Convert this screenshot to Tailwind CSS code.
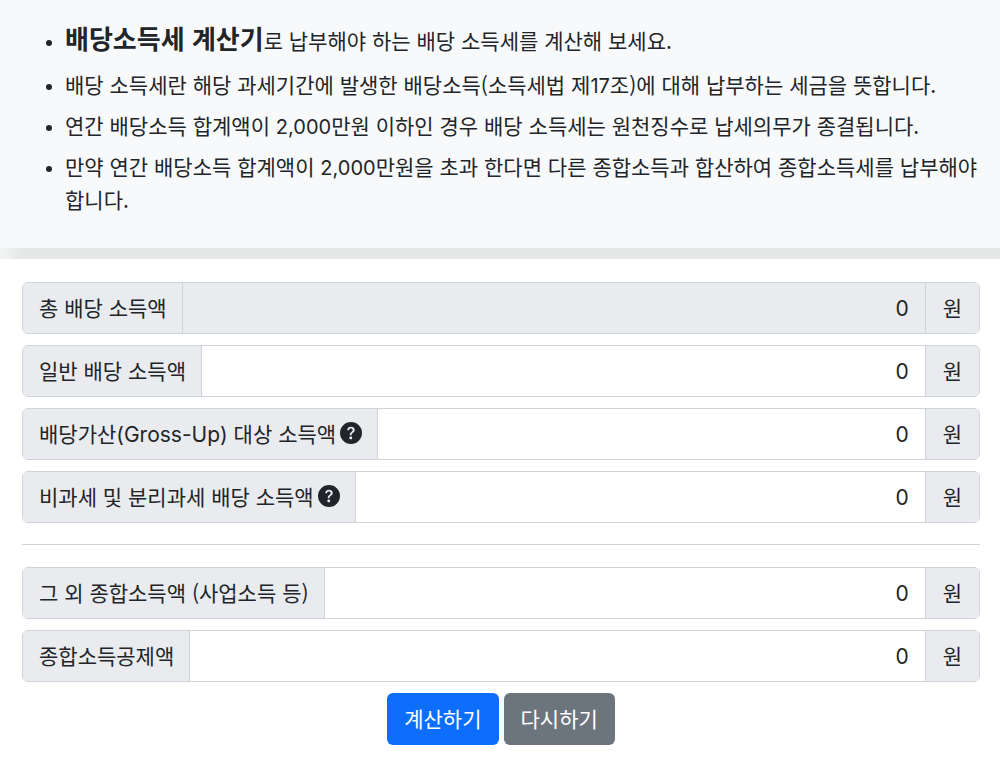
<!DOCTYPE html>
<html lang="ko">

<head>
    <meta charset="UTF-8">
    <meta name="viewport" content="width=device-width, initial-scale=1.0">
    <title>배당소득세 계산기</title>
    <script src="https://cdn.jsdelivr.net/npm/@tailwindcss/browser@4"></script>
</head>

<body class="bg-white text-[#212529] font-['Noto_Sans_CJK_KR',sans-serif] text-[21px] leading-[33px]">

    <!-- descripción -->
    <section class="bg-[#f8f9fb] pt-[18px] pr-4 pb-6 pl-[65px]">
        <ul class="list-disc flex flex-col gap-2 pb-2 break-keep marker:text-base">
            <li class="pb-[3px]"><strong class="text-[26px] leading-[39px] font-bold">배당소득세 계산기</strong>로 납부해야 하는 배당 소득세를 계산해 보세요.</li>
            <li>배당 소득세란 해당 과세기간에 발생한 배당소득(소득세법 제<span class="font-[Inter] text-xl leading-none">17</span>조)에 대해 납부하는 세금을 뜻합니다.</li>
            <li>연간 배당소득 합계액이 <span class="font-[Inter] text-xl leading-none">2,000</span>만원 이하인 경우 배당 소득세는 원천징수로 납세의무가 종결됩니다.</li>
            <li>만약 연간 배당소득 합계액이 <span class="font-[Inter] text-xl leading-none">2,000</span>만원을 초과 한다면 다른 종합소득과 합산하여 종합소득세를 납부해야 합니다.</li>
        </ul>
    </section>
    <div class="h-[11px] bg-linear-to-r from-[#f3f4f4] via-[#e6e8e7] via-2% to-[#e6e8e7]"></div>

    <!-- formulario -->
    <form class="pl-[22px] pr-5 pt-[23px] pb-4">
        <div class="flex flex-col gap-[11px]">
            <div class="flex h-[52px] rounded-md border border-[#ced4da] overflow-hidden">
                <label for="total" class="flex items-center pl-4 pr-[15px] pb-0.5 bg-[#e9ebee] border-r border-[#ced4da] whitespace-nowrap">총 배당 소득액</label>
                <input id="total" type="text" value="0" readonly class="flex-1 min-w-0 px-4 bg-[#e9ebee] text-right font-[Inter]">
                <span class="flex items-center px-[17px] pb-0.5 bg-[#e9ebee] border-l border-[#ced4da]">원</span>
            </div>
            <div class="flex h-[52px] rounded-md border border-[#ced4da] overflow-hidden">
                <label for="general" class="flex items-center pl-4 pr-[15px] pb-0.5 bg-[#e9ebee] border-r border-[#ced4da] whitespace-nowrap">일반 배당 소득액</label>
                <input id="general" type="text" value="0" class="flex-1 min-w-0 px-4 bg-white text-right font-[Inter]">
                <span class="flex items-center px-[17px] pb-0.5 bg-[#e9ebee] border-l border-[#ced4da]">원</span>
            </div>
            <div class="flex h-[52px] rounded-md border border-[#ced4da] overflow-hidden">
                <label for="grossup" class="flex items-center pl-4 pr-[15px] pb-0.5 bg-[#e9ebee] border-r border-[#ced4da] whitespace-nowrap">
                    <span>배당가산<span class="font-[Inter] leading-none">(Gross-Up)</span> 대상 소득액</span>
                    <svg class="ml-1 size-[22px]" viewBox="0 0 16 16" fill="currentColor" aria-hidden="true">
                        <path d="M16 8A8 8 0 1 1 0 8a8 8 0 0 1 16 0M5.496 6.033h.825c.138 0 .248-.113.266-.25.09-.656.54-1.134 1.342-1.134.686 0 1.314.343 1.314 1.168 0 .635-.374.927-.965 1.371-.673.489-1.206 1.06-1.168 1.987l.003.217a.25.25 0 0 0 .25.246h.811a.25.25 0 0 0 .25-.25v-.105c0-.718.273-.927 1.01-1.486.609-.463 1.244-.977 1.244-2.056 0-1.511-1.276-2.241-2.673-2.241-1.267 0-2.655.59-2.75 2.286a.237.237 0 0 0 .241.247m2.325 6.443c.61 0 1.029-.394 1.029-.927 0-.552-.42-.94-1.029-.94-.584 0-1.009.388-1.009.94 0 .533.425.927 1.01.927z" />
                    </svg>
                </label>
                <input id="grossup" type="text" value="0" class="flex-1 min-w-0 px-4 bg-white text-right font-[Inter]">
                <span class="flex items-center px-[17px] pb-0.5 bg-[#e9ebee] border-l border-[#ced4da]">원</span>
            </div>
            <div class="flex h-[52px] rounded-md border border-[#ced4da] overflow-hidden">
                <label for="taxfree" class="flex items-center pl-4 pr-[15px] pb-0.5 bg-[#e9ebee] border-r border-[#ced4da] whitespace-nowrap">
                    <span>비과세 및 분리과세 배당 소득액</span>
                    <svg class="ml-1 size-[22px]" viewBox="0 0 16 16" fill="currentColor" aria-hidden="true">
                        <path d="M16 8A8 8 0 1 1 0 8a8 8 0 0 1 16 0M5.496 6.033h.825c.138 0 .248-.113.266-.25.09-.656.54-1.134 1.342-1.134.686 0 1.314.343 1.314 1.168 0 .635-.374.927-.965 1.371-.673.489-1.206 1.06-1.168 1.987l.003.217a.25.25 0 0 0 .25.246h.811a.25.25 0 0 0 .25-.25v-.105c0-.718.273-.927 1.01-1.486.609-.463 1.244-.977 1.244-2.056 0-1.511-1.276-2.241-2.673-2.241-1.267 0-2.655.59-2.75 2.286a.237.237 0 0 0 .241.247m2.325 6.443c.61 0 1.029-.394 1.029-.927 0-.552-.42-.94-1.029-.94-.584 0-1.009.388-1.009.94 0 .533.425.927 1.01.927z" />
                    </svg>
                </label>
                <input id="taxfree" type="text" value="0" class="flex-1 min-w-0 px-4 bg-white text-right font-[Inter]">
                <span class="flex items-center px-[17px] pb-0.5 bg-[#e9ebee] border-l border-[#ced4da]">원</span>
            </div>
        </div>

        <hr class="mt-[21px] mb-[22px] border-[#d3d4d5]">

        <div class="flex flex-col gap-[11px]">
            <div class="flex h-[52px] rounded-md border border-[#ced4da] overflow-hidden">
                <label for="other" class="flex items-center pl-4 pr-[15px] pb-0.5 bg-[#e9ebee] border-r border-[#ced4da] whitespace-nowrap">그 외 종합소득액 (사업소득 등)</label>
                <input id="other" type="text" value="0" class="flex-1 min-w-0 px-4 bg-white text-right font-[Inter]">
                <span class="flex items-center px-[17px] pb-0.5 bg-[#e9ebee] border-l border-[#ced4da]">원</span>
            </div>
            <div class="flex h-[52px] rounded-md border border-[#ced4da] overflow-hidden">
                <label for="deduction" class="flex items-center pl-4 pr-[15px] pb-0.5 bg-[#e9ebee] border-r border-[#ced4da] whitespace-nowrap">종합소득공제액</label>
                <input id="deduction" type="text" value="0" class="flex-1 min-w-0 px-4 bg-white text-right font-[Inter]">
                <span class="flex items-center px-[17px] pb-0.5 bg-[#e9ebee] border-l border-[#ced4da]">원</span>
            </div>
            <div class="flex justify-center gap-[5px]">
                <button type="button" class="h-[52px] px-[17px] pb-0.5 rounded-md bg-[#0d6efd] text-white">계산하기</button>
                <button type="reset" class="h-[52px] px-[17px] pb-0.5 rounded-md bg-[#6c757d] text-white">다시하기</button>
            </div>
        </div>
    </form>

</body>

</html>
